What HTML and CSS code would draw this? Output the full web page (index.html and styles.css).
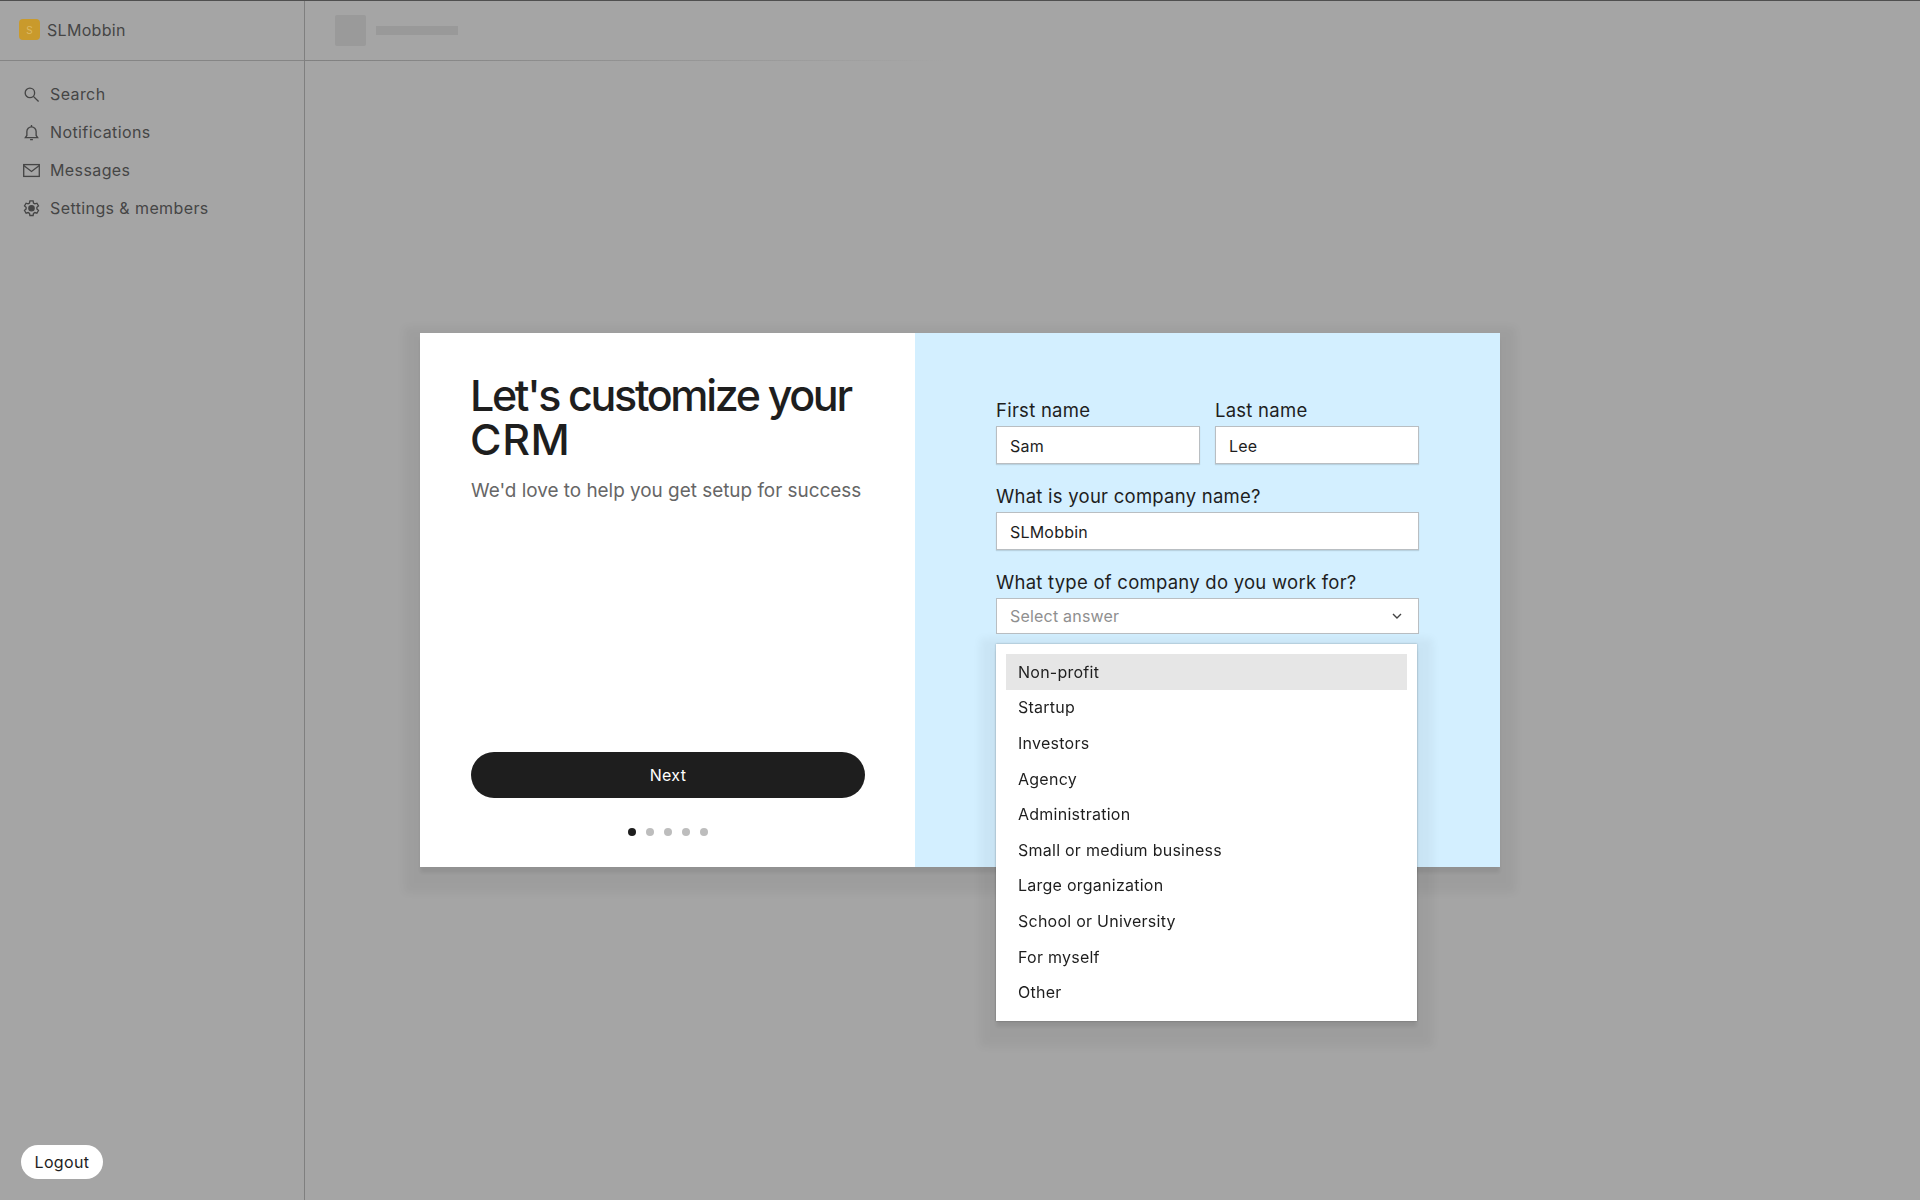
FILE: index.html
```html
<!DOCTYPE html>
<html lang="en">
<head>
    <meta charset="UTF-8">
    <title>SLMobbin</title>
    <link rel="stylesheet" href="styles.css">
</head>
<body>

    <div class="app">
        <aside class="sidebar">
            <div class="brand">
                <span class="brand-logo">S</span>
                <span>SLMobbin</span>
            </div>
            <nav class="nav">
                <a class="nav-item">
                    <svg class="nav-icon" viewBox="0 0 18 18"><circle cx="7.3" cy="7.3" r="5"/><path d="M11 11l5.500 5.500"/></svg>
                    Search
                </a>
                <a class="nav-item">
                    <svg class="nav-icon" viewBox="0 0 18 18"><path d="M2.500 14.500h13l-1.600-2.400V8a4.900 4.900 0 0 0-9.800 0v4.100z"/><path d="M9 3.100V1M7.500 16.600h3"/></svg>
                    Notifications
                </a>
                <a class="nav-item">
                    <svg class="nav-icon" viewBox="0 0 18 18"><rect x="0.75" y="2.75" width="16.5" height="12.5"/><path d="M0.75 3.800L9 10l8.250-6.200"/></svg>
                    Messages
                </a>
                <a class="nav-item">
                    <svg class="nav-icon" viewBox="0 0 18 18"><path d="M7.300 1h3.400l.4 2.200 1.500.9 2.100-.7 1.700 2.900-1.700 1.500v1.800l1.700 1.500-1.700 2.900-2.100-.7-1.500.9-.4 2.200H7.300l-.4-2.200-1.500-.9-2.100.7-1.700-2.900 1.700-1.500V7.800L1.600 6.300l1.700-2.900 2.100.7 1.500-.9z"/><circle class="nav-icon-fill" cx="9" cy="8.700" r="2.800"/></svg>
                    Settings &amp; members
                </a>
            </nav>
            <button class="logout" type="button">Logout</button>
        </aside>

        <main class="main">
            <header class="topbar">
                <div class="topbar-thumb"></div>
                <div class="topbar-title"></div>
            </header>
        </main>
    </div>

    <div class="modal-wrap">
        <div class="modal">
            <section class="modal-left">
                <h1>Let's customize your CRM</h1>
                <p class="subtitle">We'd love to help you get setup for success</p>
                <button class="next" type="button">Next</button>
                <div class="dots">
                    <span class="dot active"></span>
                    <span class="dot"></span>
                    <span class="dot"></span>
                    <span class="dot"></span>
                    <span class="dot"></span>
                </div>
            </section>

            <section class="modal-right">
                <form class="form">
                    <div class="row">
                        <div class="field">
                            <label for="first">First name</label>
                            <input id="first" type="text" value="Sam">
                        </div>
                        <div class="field">
                            <label for="last">Last name</label>
                            <input id="last" type="text" value="Lee">
                        </div>
                    </div>
                    <div class="field">
                        <label for="company">What is your company name?</label>
                        <input id="company" type="text" value="SLMobbin">
                    </div>
                    <div class="field select-field">
                        <label>What type of company do you work for?</label>
                        <div class="select">
                            <span>Select answer</span>
                            <svg class="chevron" viewBox="0 0 12 12"><path d="M2 4l4 4 4-4"/></svg>
                        </div>
                        <ul class="dropdown">
                            <li class="selected">Non-profit</li>
                            <li>Startup</li>
                            <li>Investors</li>
                            <li>Agency</li>
                            <li>Administration</li>
                            <li>Small or medium business</li>
                            <li>Large organization</li>
                            <li>School or University</li>
                            <li>For myself</li>
                            <li>Other</li>
                        </ul>
                    </div>
                </form>
            </section>
        </div>
    </div>

</body>
</html>
```

FILE: styles.css
```css
* {
    box-sizing: border-box;
}

body {
    margin: 0;
    height: 1200px;
    overflow: hidden;
    font-family: Inter, "Noto Sans", sans-serif;
    background-color: #a5a5a5;
    color: #1e1e1e;
}

.app {
    display: flex;
    height: 100%;
    border-top: 1px solid #4f4f4f;
}

.sidebar {
    width: 305px;
    flex-shrink: 0;
    display: flex;
    flex-direction: column;
    border-right: 1px solid #7f7f7f;
}

.brand {
    height: 60px;
    display: flex;
    align-items: center;
    gap: 7px;
    padding: 0 19px 2px;
    font-size: 16px;
    letter-spacing: 0.3px;
    color: #454545;
    border-bottom: 1px solid #858585;
}

.brand-logo {
    width: 21px;
    height: 21px;
    border-radius: 4px;
    background-color: #c99a2c;
    color: #dcb964;
    font-size: 10px;
    display: flex;
    align-items: center;
    justify-content: center;
}

.nav {
    display: flex;
    flex-direction: column;
    padding-top: 14px;
}

.nav-item {
    height: 38px;
    display: flex;
    align-items: center;
    gap: 10px;
    padding-left: 23px;
    font-size: 16px;
    letter-spacing: 0.4px;
    color: #454545;
}

.nav-icon {
    width: 17px;
    height: 17px;
    fill: none;
    stroke: #454545;
    stroke-width: 1.4;
}

.nav-icon-fill {
    fill: #454545;
}

.logout {
    margin: auto 0 21px 21px;
    align-self: flex-start;
    height: 34px;
    padding: 0 13.5px;
    border: none;
    border-radius: 17px;
    background-color: #fff;
    color: #1e1e1e;
    font-family: inherit;
    font-size: 16px;
    letter-spacing: 0.35px;
}

.main {
    flex-grow: 1;
}

.topbar {
    height: 60px;
    display: flex;
    align-items: center;
    gap: 10px;
    padding-left: 30px;
    border-bottom: 1px solid;
    border-image: linear-gradient(to right, #808080, #8c8c8c 220px, #a5a5a5 640px) 1;
}

.topbar-thumb {
    width: 31px;
    height: 31px;
    border-radius: 2px;
    background-color: #9a9a9a;
}

.topbar-title {
    width: 82px;
    height: 9px;
    background-color: #999;
}

.modal-wrap {
    position: fixed;
    inset: 0;
    display: flex;
    align-items: center;
    justify-content: center;
}

.modal {
    width: 1080px;
    height: 534px;
    display: flex;
    box-shadow: 0 6px 4px rgba(0, 0, 0, 0.08), 0 10px 8px 16px rgba(0, 0, 0, 0.045);
}

.modal-left {
    width: 498px;
    padding: 40px 50px 0 51px;
    background-color: #fff;
    display: flex;
    flex-direction: column;
}

h1 {
    margin: 0 0 0 -1px;
    font-size: 43px;
    line-height: 44px;
    font-weight: 500;
    letter-spacing: 0.6px;
    color: #1e1e1e;
}

h1::first-line {
    letter-spacing: -2.35px;
}

.subtitle {
    margin: 17px 0 0;
    font-size: 18.9px;
    line-height: 26px;
    color: #666;
}

.next {
    margin-top: auto;
    width: 394px;
    height: 46px;
    flex-shrink: 0;
    border: none;
    border-radius: 23px;
    background-color: #1e1e1e;
    color: #fff;
    font-family: inherit;
    font-size: 16px;
    letter-spacing: 0.3px;
}

.dots {
    display: flex;
    justify-content: center;
    gap: 10px;
    margin: 30px 0 31px;
}

.dot {
    width: 8px;
    height: 8px;
    border-radius: 50%;
    background-color: #bdbdbd;
}

.dot.active {
    background-color: #1e1e1e;
}

.modal-right {
    flex-grow: 1;
    padding: 66px 81px 0;
    background-color: #d3efff;
}

.form {
    display: flex;
    flex-direction: column;
    gap: 21px;
}

.row {
    display: flex;
    gap: 15px;
}

.field {
    flex: 1;
    display: flex;
    flex-direction: column;
    gap: 5px;
    min-width: 0;
}

.field label {
    font-size: 18.5px;
    line-height: 22px;
    letter-spacing: 0.25px;
    color: #1e1e1e;
}

.field input {
    width: 100%;
    height: 38px;
    padding: 2px 13px 0;
    border: 1px solid #b9bec2;
    box-shadow: 0 1px 1px rgba(0, 0, 0, 0.12);
    border-radius: 0;
    background-color: #fff;
    font-family: inherit;
    font-size: 16px;
    letter-spacing: 0.2px;
    color: #1e1e1e;
}

.select-field {
    position: relative;
}

.select {
    height: 36px;
    display: flex;
    align-items: center;
    justify-content: space-between;
    padding: 0 15px 0 13px;
    border: 1px solid #b9bec2;
    background-color: #fff;
    font-size: 16px;
    letter-spacing: 0.2px;
    color: #8f8f8f;
}

.chevron {
    width: 12px;
    height: 12px;
    fill: none;
    stroke: #444;
    stroke-width: 1.4;
}

.dropdown {
    position: absolute;
    top: 73px;
    left: 0;
    width: 421px;
    margin: 0;
    padding: 10px 10px 11px;
    list-style: none;
    background-color: #fff;
    box-shadow: 0 0 2px rgba(0, 0, 0, 0.3), 0 6px 4px rgba(0, 0, 0, 0.08), 0 10px 8px 16px rgba(0, 0, 0, 0.045);
}

.dropdown li {
    height: 35.6px;
    padding-left: 12px;
    display: flex;
    align-items: center;
    font-size: 16px;
    letter-spacing: 0.25px;
    color: #1e1e1e;
}

.dropdown li.selected {
    background-color: #e6e6e6;
}
```
